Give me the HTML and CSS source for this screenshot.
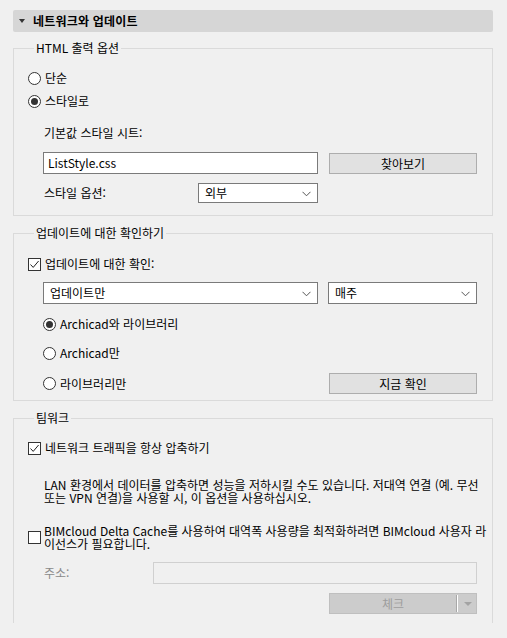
FILE: index.html
```html
<!DOCTYPE html>
<html lang="ko">
<head>
<meta charset="utf-8">
<title>네트워크와 업데이트</title>
<link rel="stylesheet" href="styles.css">
</head>
<body>
<div class="panel">
  <div class="header"><span class="tri"></span><span class="htitle">네트워크와 업데이트</span></div>

  <fieldset class="group g1">
    <legend>HTML 출력 옵션</legend>
    <div class="row opt first"><span class="radio"></span><span class="lbl">단순</span></div>
    <div class="row opt second"><span class="radio on"></span><span class="lbl">스타일로</span></div>
    <div class="row sub caption">기본값 스타일 시트:</div>
    <div class="row field-row">
      <div class="textbox wide">ListStyle.css</div>
      <div class="btn">찾아보기</div>
    </div>
    <div class="row select-row">
      <span class="sel-label">스타일 옵션:</span>
      <div class="select narrow"><span>외부</span><svg class="chev" width="9" height="6" viewBox="0 0 9 6"><path d="M0.5 0.8 L4.5 4.8 L8.5 0.8" fill="none" stroke="#555" stroke-width="1"/></svg></div>
    </div>
  </fieldset>

  <fieldset class="group g2">
    <legend>업데이트에 대한 확인하기</legend>
    <div class="row opt check-row"><span class="check"><svg width="11" height="11" viewBox="0 0 11 11"><path d="M1.5 5.5 L4.2 8.4 L9.6 2" fill="none" stroke="#222" stroke-width="1"/></svg></span><span class="lbl">업데이트에 대한 확인:</span></div>
    <div class="row selects">
      <div class="select wide"><span>업데이트만</span><svg class="chev" width="9" height="6" viewBox="0 0 9 6"><path d="M0.5 0.8 L4.5 4.8 L8.5 0.8" fill="none" stroke="#555" stroke-width="1"/></svg></div>
      <div class="select freq"><span>매주</span><svg class="chev" width="9" height="6" viewBox="0 0 9 6"><path d="M0.5 0.8 L4.5 4.8 L8.5 0.8" fill="none" stroke="#555" stroke-width="1"/></svg></div>
    </div>
    <div class="row subopt"><span class="radio on"></span><span class="lbl">Archicad와 라이브러리</span></div>
    <div class="row subopt"><span class="radio"></span><span class="lbl">Archicad만</span></div>
    <div class="row subopt last">
      <div class="subopt-in"><span class="radio"></span><span class="lbl">라이브러리만</span></div>
      <div class="btn">지금 확인</div>
    </div>
  </fieldset>

  <fieldset class="group g3">
    <legend>팀워크</legend>
    <div class="row opt tw-check"><span class="check"><svg width="11" height="11" viewBox="0 0 11 11"><path d="M1.5 5.5 L4.2 8.4 L9.6 2" fill="none" stroke="#222" stroke-width="1"/></svg></span><span class="lbl">네트워크 트래픽을 항상 압축하기</span></div>
    <p class="note">LAN 환경에서 데이터를 압축하면 성능을 저하시킬 수도 있습니다. 저대역 연결 (예. 무선<br>또는 VPN 연결)을 사용할 시, 이 옵션을 사용하십시오.</p>
    <div class="row opt bim"><span class="check"></span><span class="lbl two">BIMcloud Delta Cache를 사용하여 대역폭 사용량을 최적화하려면 BIMcloud 사용자 라<br>이선스가 필요합니다.</span></div>
    <div class="row addr">
      <span class="addr-label">주소:</span>
      <div class="textbox disabled"></div>
    </div>
    <div class="row split-row">
      <div class="split"><span class="split-text">체크</span><span class="split-sep"></span><span class="split-arrow"></span></div>
    </div>
  </fieldset>
</div>
</body>
</html>
```

FILE: styles.css
```css
html, body {
  margin: 0;
  padding: 0;
  background: #f0f0f0;
}
body {
  font-family: "Noto Sans CJK KR", sans-serif;
  font-size: 12px;
  color: #000;
  width: 507px;
  height: 638px;
  overflow: hidden;
}
.panel {
  padding: 10px 14px 0 13px;
}
.header {
  height: 22px;
  background: #d6d6d6;
  border-radius: 2px;
  display: flex;
  align-items: center;
}
.tri {
  width: 0;
  height: 0;
  border-left: 3.5px solid transparent;
  border-right: 3.5px solid transparent;
  border-top: 4px solid #333;
  margin-left: 6px;
  margin-right: 8px;
}
.htitle {
  font-weight: bold;
  font-size: 12px;
  line-height: 16px;
  letter-spacing: 0.2px;
}
.group {
  margin: 8px 0 0 0;
  padding: 0 0 0 14px;
  border: 1px solid #dadada;
  min-width: 0;
}
.group legend {
  margin-left: 6px;
  padding: 0 2px;
  line-height: 16px;
  height: 16px;
}
.g2, .g3 { margin-top: 9px; }
.g1 { padding-bottom: 12px; }
.g2 { padding-bottom: 6px; }
.g3 { padding-bottom: 9px; border-bottom: none; }

.row {
  display: flex;
  align-items: center;
  line-height: 18px;
}
.lbl { margin-left: 4px; white-space: nowrap; }
.radio {
  box-sizing: border-box;
  width: 13px;
  height: 13px;
  border: 1px solid #333;
  border-radius: 50%;
  background: #fff;
  display: flex;
  align-items: center;
  justify-content: center;
  flex: none;
}
.radio.on::after {
  content: "";
  width: 7px;
  height: 7px;
  border-radius: 50%;
  background: #333;
}
.check {
  box-sizing: border-box;
  width: 13px;
  height: 13px;
  border: 1px solid #333;
  background: #fff;
  display: flex;
  align-items: center;
  justify-content: center;
  flex: none;
}
.check svg { display: block; }

.g1 .first { margin-top: 13px; height: 18px; }
.g1 .second { margin-top: 5px; height: 18px; }
.caption { margin: 14px 0 0 16px; height: 18px; }
.field-row { margin: 10px 0 0 15px; height: 22px; }
.textbox {
  box-sizing: border-box;
  height: 22px;
  border: 1px solid #7a7a7a;
  background: #fff;
  line-height: 20px;
  padding-left: 4px;
}
.textbox.wide { width: 275px; }
.btn {
  box-sizing: border-box;
  width: 148px;
  height: 21px;
  margin-left: 11px;
  background: #e1e1e1;
  border: 1px solid #adadad;
  text-align: center;
  line-height: 19px;
}
.select-row { margin: 9px 0 0 16px; height: 20px; }
.sel-label { width: 154px; }
.select {
  box-sizing: border-box;
  height: 20px;
  border: 1px solid #7a7a7a;
  background: #fff;
  display: flex;
  align-items: center;
  justify-content: space-between;
  padding: 0 6px 0 6px;
  line-height: 18px;
}
.select.narrow { width: 120px; }
.select.wide { width: 275px; height: 22px; }
.select.freq { width: 149px; height: 22px; margin-left: 10px; }
.chev { flex: none; margin-top: 1px; }

.check-row { margin-top: 14px; height: 18px; }
.selects { margin: 9px 0 0 15px; height: 22px; }
.subopt { margin: 11px 0 0 15px; height: 18px; }
.subopt.last { width: 434px; height: 21px; justify-content: space-between; }
.subopt-in { display: flex; align-items: center; }

.tw-check { margin-top: 13px; height: 18px; }
.note {
  margin: 21px 0 0 16px;
  line-height: 13px;
  white-space: nowrap;
}
.bim { margin-top: 20px; align-items: center; }
.lbl.two { line-height: 13px; margin-left: 3px; }
.addr { margin: 12px 0 0 16px; height: 22px; }
.addr-label { width: 109px; color: #8a8a8a; }
.textbox.disabled {
  width: 324px;
  border-color: #d0d0d0;
  background: #f0f0f0;
}
.split-row { margin: 9px 0 0 301px; height: 21px; }
.split {
  box-sizing: border-box;
  width: 148px;
  height: 21px;
  background: #cccccc;
  border: 1px solid #bfbfbf;
  display: flex;
  align-items: center;
  color: #9d9d9d;
}
.split-text { width: 126px; text-align: center; line-height: 19px; }
.split-sep {
  width: 1px;
  height: 17px;
  background: #fff;
  border-left: 1px solid #a8a8a8;
}
.split-arrow {
  width: 0;
  height: 0;
  margin-left: 6px;
  border-left: 4px solid transparent;
  border-right: 4px solid transparent;
  border-top: 4px solid #a3a3a3;
}
```
